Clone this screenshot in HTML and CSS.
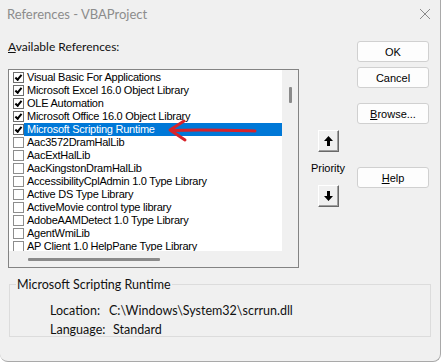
FILE: index.html
```html
<!DOCTYPE html>
<html lang="en">
<head>
    <meta charset="UTF-8">
    <meta name="viewport" content="width=device-width, initial-scale=1.0">
    <title>References - VBAProject</title>
    <link rel="stylesheet" href="styles.css">
</head>
<body>
    <div class="dialog">
        <div class="titlebar">
            <span class="title">References - VBAProject</span>
            <svg class="close" width="12" height="12" viewBox="0 0 12 12"><path d="M1 1L11 11M11 1L1 11" stroke="#8a8a8a" stroke-width="1"/></svg>
        </div>
        <div class="main">
            <div class="left">
                <div class="caption"><u>A</u>vailable References:</div>
                <div class="listbox">
                    <div class="listarea">
                        <div class="items">
                            <div class="item"><span class="check on"></span><span class="name">Visual Basic For Applications</span></div>
                            <div class="item"><span class="check on"></span><span class="name">Microsoft Excel 16.0 Object Library</span></div>
                            <div class="item"><span class="check on"></span><span class="name">OLE Automation</span></div>
                            <div class="item"><span class="check on"></span><span class="name">Microsoft Office 16.0 Object Library</span></div>
                            <div class="item"><span class="check on"></span><span class="name selected">Microsoft Scripting Runtime</span></div>
                            <div class="item"><span class="check"></span><span class="name">Aac3572DramHalLib</span></div>
                            <div class="item"><span class="check"></span><span class="name">AacExtHalLib</span></div>
                            <div class="item"><span class="check"></span><span class="name">AacKingstonDramHalLib</span></div>
                            <div class="item"><span class="check"></span><span class="name">AccessibilityCplAdmin 1.0 Type Library</span></div>
                            <div class="item"><span class="check"></span><span class="name">Active DS Type Library</span></div>
                            <div class="item"><span class="check"></span><span class="name">ActiveMovie control type library</span></div>
                            <div class="item"><span class="check"></span><span class="name">AdobeAAMDetect 1.0 Type Library</span></div>
                            <div class="item"><span class="check"></span><span class="name">AgentWmiLib</span></div>
                            <div class="item"><span class="check"></span><span class="name">AP Client 1.0 HelpPane Type Library</span></div>
                        </div>
                        <div class="vscroll"><div class="vthumb"></div></div>
                    </div>
                    <div class="hscroll"><div class="hthumb"></div></div>
                    <svg class="redarrow" width="100" height="30" viewBox="0 0 100 30">
                        <path d="M92 13 C72 12.5 40 11.5 8 12.5 M21 3 L7 12 L22 22" fill="none" stroke="#d8232a" stroke-width="3" stroke-linecap="round" stroke-linejoin="round"/>
                    </svg>
                </div>
            </div>
            <div class="priority">
                <button class="arrow"><svg width="9" height="10" viewBox="0 0 9 10"><path d="M4.5 0L9 5H6V10H3V5H0Z" fill="#000"/></svg></button>
                <div class="plabel">Priority</div>
                <button class="arrow"><svg width="9" height="10" viewBox="0 0 9 10"><path d="M4.5 10L9 5H6V0H3V5H0Z" fill="#000"/></svg></button>
            </div>
            <div class="buttons">
                <button class="btn">OK</button>
                <button class="btn">Cancel</button>
                <button class="btn browse"><u>B</u>rowse...</button>
                <button class="btn help"><u>H</u>elp</button>
            </div>
        </div>
        <fieldset class="group">
            <legend>Microsoft Scripting Runtime</legend>
            <div class="info"><span class="key loc">Location:</span><span>C:\Windows\System32\scrrun.dll</span></div>
            <div class="info"><span class="key lang">Language:</span><span>Standard</span></div>
        </fieldset>
    </div>
</body>
</html>
```

FILE: styles.css
```css
body{
    margin: 0;
    background: #ffffff;
    font-family: Lato, "Open Sans", sans-serif;
}
.dialog{
    width: 441px;
    height: 362px;
    box-sizing: border-box;
    background: #f0f0f0;
    border-right: 1px solid #a9a9a9;
    border-bottom: 1px solid #a9a9a9;
    border-radius: 0 0 8px 8px;
}
.titlebar{
    height: 28px;
    display: flex;
    align-items: center;
    justify-content: space-between;
    padding: 0 9px 0 7px;
}
.title{
    font-size: 13px;
    color: #8c8c8c;
}
.close{
    margin-top: -1px;
}
.main{
    display: flex;
    padding-left: 8px;
}
.left{
    width: 291px;
}
.caption{
    font-size: 12px;
    color: #111;
    height: 41px;
    line-height: 38px;
}
.listbox{
    position: relative;
    height: 199px;
    box-sizing: border-box;
    border: 1px solid #838383;
    background: #fff;
    display: flex;
    flex-direction: column;
}
.listarea{
    display: flex;
    height: 181px;
}
.items{
    flex: 1;
    overflow: hidden;
    font-family: "Liberation Sans", Arial, sans-serif;
    font-size: 11px;
    letter-spacing: -0.25px;
    color: #000;
    padding-top: 1px;
}
.item{
    display: flex;
    align-items: center;
    height: 13px;
    padding-left: 4px;
    white-space: nowrap;
}
.check{
    width: 11px;
    height: 11px;
    box-sizing: border-box;
    border: 1px solid #8d8d8d;
    background: #fff;
    flex: none;
    display: flex;
    align-items: center;
    justify-content: center;
}
.check.on{
    border-color: #6e6e6e;
}
.check.on::after{
    content: "";
    width: 5px;
    height: 2px;
    border-left: 2px solid #000;
    border-bottom: 2px solid #000;
    transform: rotate(-50deg);
    margin-top: -2px;
}
.name{
    flex: 1;
    padding-left: 3px;
    line-height: 13px;
}
.selected{
    background: #0078d7;
    color: #fff;
}
.vscroll{
    width: 16px;
    background: #f0f0f0;
}
.vthumb{
    width: 3px;
    height: 16px;
    background: #8a8a8a;
    margin: 17px 0 0 7px;
    border-radius: 1px;
}
.hscroll{
    height: 16px;
    background: #f0f0f0;
    display: flex;
    align-items: center;
}
.hthumb{
    width: 132px;
    height: 3px;
    background: #8a8a8a;
    margin-left: 19px;
    border-radius: 1px;
}
.redarrow{
    position: absolute;
    left: 154px;
    top: 48px;
}
.priority{
    width: 58px;
    display: flex;
    flex-direction: column;
    align-items: center;
    padding-top: 102px;
}
.arrow{
    width: 21px;
    height: 22px;
    padding: 0;
    background: #f0f0f0;
    border: 1px solid;
    border-color: #fff #696969 #696969 #fff;
    box-shadow: inset -1px -1px 0 #a0a0a0;
    display: flex;
    align-items: center;
    justify-content: center;
}
.plabel{
    font-family: "Liberation Sans", Arial, sans-serif;
    font-size: 11px;
    margin: 10px 0 11px;
}
.buttons{
    width: 72px;
    display: flex;
    flex-direction: column;
    padding-top: 13px;
}
.btn{
    height: 21px;
    margin-bottom: 5px;
    background: #fdfdfd;
    border: 1px solid #d0d0d0;
    border-radius: 3px;
    font-family: "Liberation Sans", Arial, sans-serif;
    font-size: 11px;
    color: #000;
    padding: 0;
}
.browse{
    margin-top: 10px;
}
.help{
    margin-top: 38px;
}
.group{
    margin: 9px 9px 0 9px;
    height: 49px;
    border: 1px solid #dcdcdc;
    padding: 9px 0 0 0;
    font-size: 12.5px;
    color: #111;
}
.group legend{
    padding: 0 1px;
    margin-left: 6px;
}
.info{
    display: flex;
    height: 19px;
    align-items: center;
    padding-left: 40px;
}
.loc{
    width: 59px;
}
.lang{
    width: 63px;
}
```
